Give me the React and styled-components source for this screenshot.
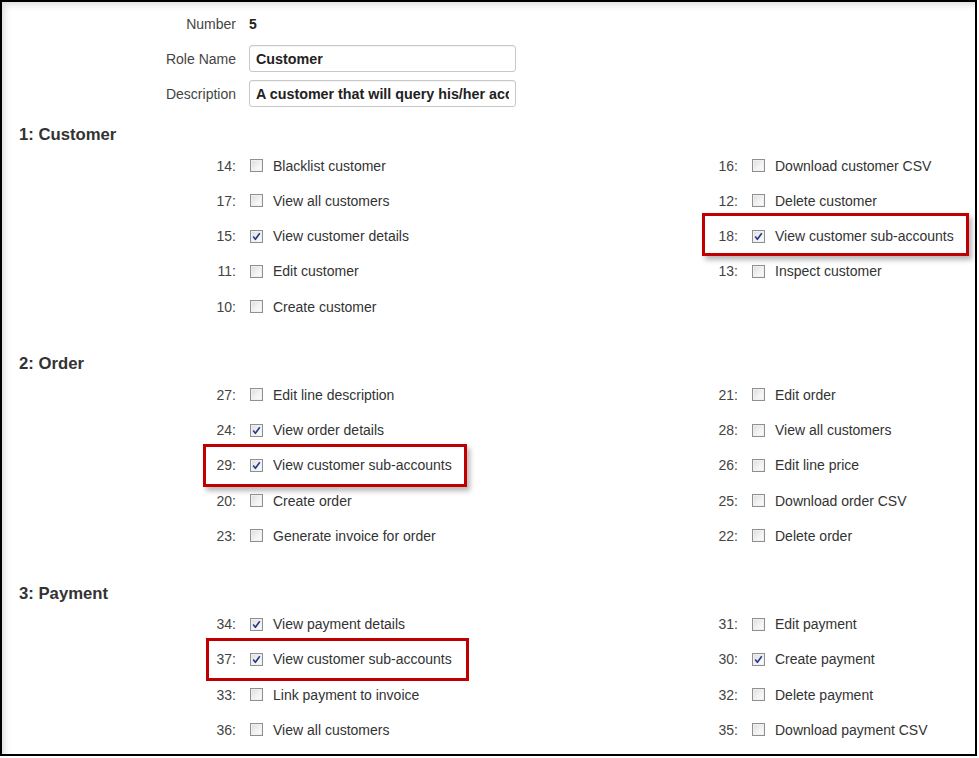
import React from "react";
import styled, { createGlobalStyle } from "styled-components";

const Global = createGlobalStyle`
  html, body { margin: 0; padding: 0; background: #fff; }
  body { font-family: "Liberation Sans", Arial, sans-serif; color: #333; }
`;

const Frame = styled.div`
  box-sizing: border-box;
  width: 977px;
  height: 756px;
  border: 2px solid #000;
  background: #fff;
  box-shadow: inset 5px 5px 6px -2px rgba(0, 0, 0, 0.13);
  padding: 8px 17px 0 17px;
  overflow: hidden;
`;

const Form = styled.div`
  display: grid;
  grid-template-columns: 217px 267px;
  grid-auto-rows: 27px;
  column-gap: 13px;
  row-gap: 8px;
  align-items: center;
`;

const FieldLabel = styled.label`
  text-align: right;
  font-size: 14px;
  color: #444;
`;

const Value = styled.div`
  font-size: 14px;
  font-weight: bold;
  color: #222;
`;

const TextBox = styled.input`
  box-sizing: border-box;
  width: 267px;
  height: 27px;
  margin: 0;
  border: 1px solid #c8c8c8;
  border-radius: 3px;
  padding: 0 6px;
  font-family: "Liberation Sans", Arial, sans-serif;
  font-size: 14.3px;
  font-weight: bold;
  color: #222;
  background: #fff;
  outline: none;
  box-shadow: inset 0 1px 1px rgba(0, 0, 0, 0.05);
`;

const Section = styled.section`
  margin-top: ${(p) => p.$top}px;
`;

const Heading = styled.h2`
  margin: 0 0 3px 0;
  font-size: 16.7px;
  line-height: 20px;
  font-weight: bold;
  color: #333;
`;

const Grid = styled.div`
  display: grid;
  grid-template-columns: 502px 502px;
  grid-auto-rows: 35.25px;
  padding-left: 181px;
`;

const Item = styled.div`
  position: relative;
  display: flex;
  align-items: center;
  font-size: 14px;
  color: #333;
  &::after {
    content: ${(p) => (p.$mark ? '""' : "none")};
    position: absolute;
    box-sizing: border-box;
    left: ${(p) => p.$mark?.l ?? 0}px;
    top: ${(p) => p.$mark?.t ?? 0}px;
    width: ${(p) => p.$mark?.w ?? 0}px;
    height: ${(p) => p.$mark?.h ?? 0}px;
    border: 3px solid #c00000;
    box-shadow: ${(p) =>
      p.$mark?.shadow ? "3px 4px 5px rgba(0,0,0,0.28)" : "none"};
    pointer-events: none;
  }
`;

const Num = styled.span`
  width: 36px;
  text-align: right;
  color: #444;
`;

const Box = styled.span`
  box-sizing: border-box;
  width: 13px;
  height: 13px;
  margin: 0 10px 0 14px;
  border: 1px solid #8e8f8f;
  background: linear-gradient(135deg, #dcdcdc 0%, #f4f4f4 60%, #fbfbfb 100%);
  box-shadow: inset 0 0 0 1px #f0f0f0;
  display: flex;
  align-items: center;
  justify-content: center;
`;

const Check = () => (
  <svg width="9" height="9" viewBox="0 0 9 9">
    <path
      d="M1.2 4.6 L3.4 7.3 L7.8 1.2"
      fill="none"
      stroke="#25368c"
      strokeWidth="1.6"
      strokeLinejoin="round"
    />
  </svg>
);

const Perm = ({ n, label, on, mark }) => (
  <Item $mark={mark}>
    <Num>{n}:</Num>
    <Box>{on && <Check />}</Box>
    <span>{label}</span>
  </Item>
);

const sections = [
  {
    title: "1: Customer",
    top: 18,
    items: [
      { n: 14, label: "Blacklist customer" },
      { n: 16, label: "Download customer CSV" },
      { n: 17, label: "View all customers" },
      { n: 12, label: "Delete customer" },
      { n: 15, label: "View customer details", on: true },
      {
        n: 18,
        label: "View customer sub-accounts",
        on: true,
        mark: { l: 0, t: -6, w: 267, h: 43, shadow: true },
      },
      { n: 11, label: "Edit customer" },
      { n: 13, label: "Inspect customer" },
      { n: 10, label: "Create customer" },
      null,
    ],
  },
  {
    title: "2: Order",
    top: 30,
    items: [
      { n: 27, label: "Edit line description" },
      { n: 21, label: "Edit order" },
      { n: 24, label: "View order details", on: true },
      { n: 28, label: "View all customers" },
      {
        n: 29,
        label: "View customer sub-accounts",
        on: true,
        mark: { l: 3, t: -4, w: 264, h: 43, shadow: true },
      },
      { n: 26, label: "Edit line price" },
      { n: 20, label: "Create order" },
      { n: 25, label: "Download order CSV" },
      { n: 23, label: "Generate invoice for order" },
      { n: 22, label: "Delete order" },
    ],
  },
  {
    title: "3: Payment",
    top: 30,
    items: [
      { n: 34, label: "View payment details", on: true },
      { n: 31, label: "Edit payment" },
      {
        n: 37,
        label: "View customer sub-accounts",
        on: true,
        mark: { l: 6, t: -4, w: 263, h: 43, shadow: false },
      },
      { n: 30, label: "Create payment", on: true },
      { n: 33, label: "Link payment to invoice" },
      { n: 32, label: "Delete payment" },
      { n: 36, label: "View all customers" },
      { n: 35, label: "Download payment CSV" },
    ],
  },
];

export default function App() {
  return (
    <>
      <Global />
      <Frame>
        <Form>
          <FieldLabel>Number</FieldLabel>
          <Value>5</Value>
          <FieldLabel>Role Name</FieldLabel>
          <TextBox readOnly value="Customer" />
          <FieldLabel>Description</FieldLabel>
          <TextBox readOnly value="A customer that will query his/her account" />
        </Form>
        {sections.map((s) => (
          <Section key={s.title} $top={s.top}>
            <Heading>{s.title}</Heading>
            <Grid>
              {s.items.map((it, i) =>
                it ? <Perm key={it.n} {...it} /> : <div key={"e" + i} />
              )}
            </Grid>
          </Section>
        ))}
      </Frame>
    </>
  );
}
